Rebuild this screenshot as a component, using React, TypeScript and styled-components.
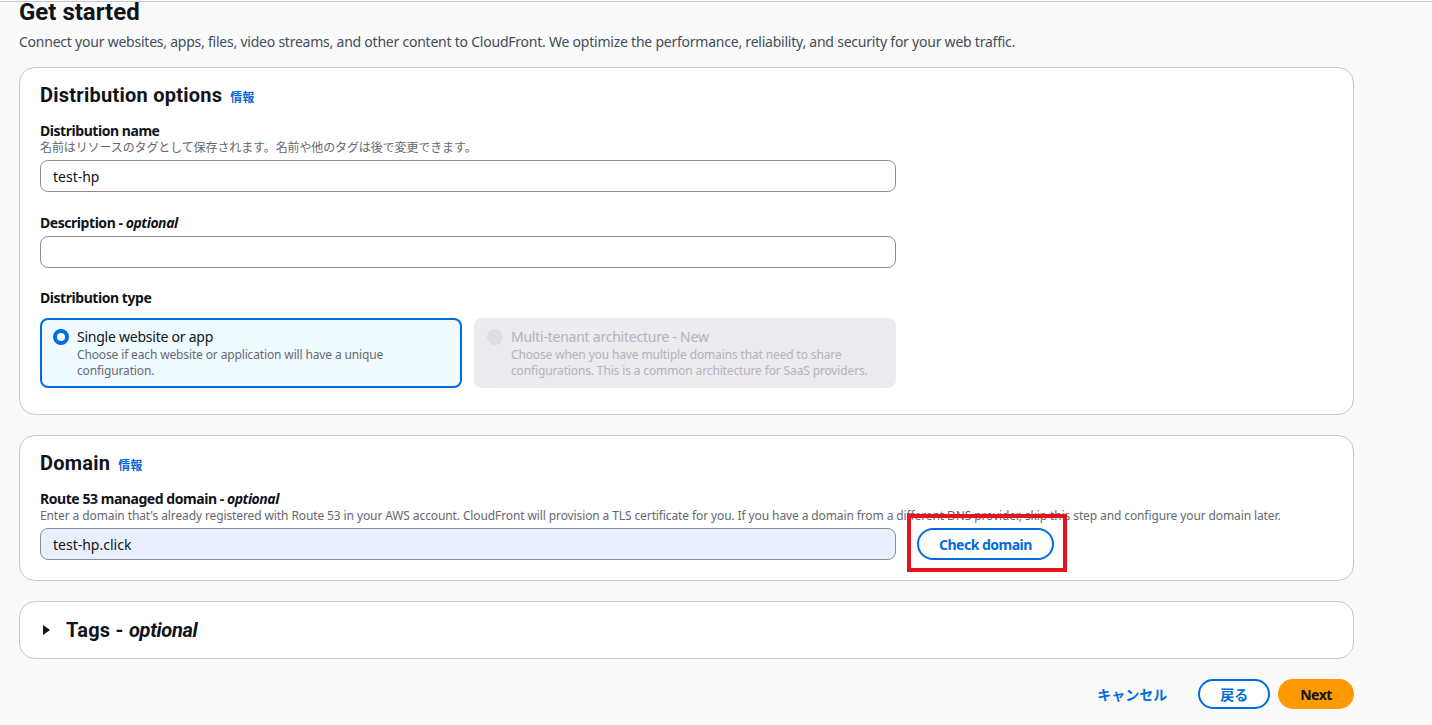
import styled, { createGlobalStyle } from "styled-components"

const GlobalStyle = createGlobalStyle`
    body {
        margin:0;
        background:#fafafa;
        font-family:"Noto Sans", "Noto Sans CJK JP", sans-serif;
        color:#0f141a;
    }
`

const Page = styled.div`
    margin-top:1px;
    border-top:1px solid #c6c6cd;
    padding:0 78px 16px 19px;
`

const PageTitle = styled.h1`
    margin:0;
    font-family:Roboto, "Noto Sans CJK JP", sans-serif;
    font-size:24px;
    line-height:20px;
    font-weight:700;
`

const PageLead = styled.p`
    margin:10px 0 15px;
    font-size:14px;
    line-height:20px;
    letter-spacing:-0.23px;
    color:#414d5c;
`

const Card = styled.section<{ $pb?: number }>`
    background:white;
    border:1px solid #c6c6cd;
    border-radius:16px;
    padding:15px 20px ${p => p.$pb ?? 20}px;
    margin-bottom:20px;
`

const CardHeader = styled.div`
    display:flex;
    align-items:baseline;
    gap:8px;
`

const CardTitle = styled.h2`
    margin:0;
    font-family:Roboto, "Noto Sans CJK JP", sans-serif;
    font-size:20px;
    line-height:24px;
    font-weight:700;
    letter-spacing:0.25px;
    em { font-style:italic; letter-spacing:-0.3px; }
`

const Info = styled.a`
    font-size:12px;
    font-weight:700;
    color:#006ce0;
    text-decoration:none;
`

const Field = styled.div<{ $mt?: number }>`
    margin-top:${p => p.$mt ?? 15}px;
`

const Label = styled.div`
    font-size:14px;
    line-height:18px;
    font-weight:700;
    letter-spacing:-0.45px;
    em { font-style:italic; }
`

const Hint = styled.div`
    font-size:12px;
    line-height:16px;
    letter-spacing:-0.11px;
    color:#656871;
`

const Input = styled.input<{ $filled?: boolean }>`
    display:block;
    box-sizing:border-box;
    width:856px;
    height:32px;
    margin-top:4px;
    padding:0 12px;
    border:1px solid #8c8c94;
    border-radius:8px;
    background:${p => (p.$filled ? "#e8f0fe" : "white")};
    font-family:inherit;
    font-size:14px;
    color:#0f141a;
    outline:none;
`

const TileGrid = styled.div`
    display:grid;
    grid-template-columns:422px 422px;
    gap:12px;
    margin-top:11px;
`

const Tile = styled.div<{ $selected?: boolean }>`
    display:flex;
    gap:8px;
    box-sizing:border-box;
    height:70px;
    padding:8px 12px 8px 11px;
    border:2px solid ${p => (p.$selected ? "#006ce0" : "#ebebf0")};
    border-radius:8px;
    background:${p => (p.$selected ? "#f0fbff" : "#ebebf0")};
    color:${p => (p.$selected ? "#0f141a" : "#b4b4bb")};
`

const Radio = styled.span<{ $selected?: boolean }>`
    flex:none;
    box-sizing:border-box;
    width:16px;
    height:16px;
    margin-top:1px;
    border-radius:50%;
    background:${p => (p.$selected ? "white" : "#dedee3")};
    border:${p => (p.$selected ? "4px solid #006ce0" : "none")};
`

const TileTitle = styled.div`
    font-size:14px;
    line-height:18px;
    letter-spacing:-0.24px;
`

const TileHint = styled.div<{ $selected?: boolean }>`
    font-size:12px;
    line-height:15.5px;
    margin-top:1px;
    letter-spacing:-0.14px;
    color:${p => (p.$selected ? "#656871" : "#b4b4bb")};
`

const DomainRow = styled.div`
    display:flex;
    align-items:center;
    gap:21px;
    margin-top:4px;
    input { margin-top:0; }
`

const Highlight = styled.div`
    position:relative;
`

const RedBox = styled.div`
    position:absolute;
    left:-10px;
    top:-14px;
    width:160px;
    height:58px;
    box-sizing:border-box;
    border:4px solid #e4141f;
    pointer-events:none;
`

const OutlineButton = styled.button`
    height:32px;
    padding:0 20px;
    border:2px solid #006ce0;
    border-radius:20px;
    background:white;
    color:#006ce0;
    font-family:inherit;
    font-size:14px;
    font-weight:700;
    letter-spacing:-0.5px;
`

const Expander = styled.div`
    display:flex;
    align-items:center;
    gap:16px;
    height:24px;
    padding:1px 0 0 3px;
`

const Caret = styled.span`
    width:0;
    height:0;
    border-top:5px solid transparent;
    border-bottom:5px solid transparent;
    border-left:7px solid #0f141a;
`

const Footer = styled.div`
    display:flex;
    justify-content:flex-end;
    align-items:center;
    gap:8px;
    margin-top:20px;
`

const LinkButton = styled.button`
    padding:4px 20px;
    margin-right:3px;
    border:none;
    background:none;
    color:#006ce0;
    font-family:inherit;
    font-size:14px;
    font-weight:700;
`

const FooterButton = styled.button<{ $primary?: boolean }>`
    height:30px;
    padding:0 20px;
    border:2px solid ${p => (p.$primary ? "#ff9900" : "#006ce0")};
    border-radius:20px;
    background:${p => (p.$primary ? "#ff9900" : "white")};
    color:${p => (p.$primary ? "#0f141a" : "#006ce0")};
    font-family:inherit;
    font-size:14px;
    font-weight:700;
    letter-spacing:${p => (p.$primary ? "-0.45px" : "0")};
`

export default function App() {
    return (
        <>
            <GlobalStyle />
            <Page>
                <PageTitle>Get started</PageTitle>
                <PageLead>
                    Connect your websites, apps, files, video streams, and other content to CloudFront. We optimize the performance, reliability, and security for your web traffic.
                </PageLead>

                <Card $pb={26}>
                    <CardHeader>
                        <CardTitle>Distribution options</CardTitle>
                        <Info href="#">情報</Info>
                    </CardHeader>
                    <Field>
                        <Label>Distribution name</Label>
                        <Hint>名前はリソースのタグとして保存されます。名前や他のタグは後で変更できます。</Hint>
                        <Input defaultValue="test-hp" />
                    </Field>
                    <Field $mt={22}>
                        <Label>Description - <em>optional</em></Label>
                        <Input />
                    </Field>
                    <Field $mt={21}>
                        <Label>Distribution type</Label>
                        <TileGrid>
                            <Tile $selected>
                                <Radio $selected />
                                <div>
                                    <TileTitle>Single website or app</TileTitle>
                                    <TileHint $selected>Choose if each website or application will have a unique configuration.</TileHint>
                                </div>
                            </Tile>
                            <Tile>
                                <Radio />
                                <div>
                                    <TileTitle>Multi-tenant architecture - New</TileTitle>
                                    <TileHint>Choose when you have multiple domains that need to share configurations. This is a common architecture for SaaS providers.</TileHint>
                                </div>
                            </Tile>
                        </TileGrid>
                    </Field>
                </Card>

                <Card>
                    <CardHeader>
                        <CardTitle>Domain</CardTitle>
                        <Info href="#">情報</Info>
                    </CardHeader>
                    <Field>
                        <Label>Route 53 managed domain - <em>optional</em></Label>
                        <Hint>Enter a domain that's already registered with Route 53 in your AWS account. CloudFront will provision a TLS certificate for you. If you have a domain from a different DNS provider, skip this step and configure your domain later.</Hint>
                        <DomainRow>
                            <Input $filled defaultValue="test-hp.click" />
                            <Highlight>
                                <OutlineButton>Check domain</OutlineButton>
                                <RedBox />
                            </Highlight>
                        </DomainRow>
                    </Field>
                </Card>

                <Card $pb={16}>
                    <Expander>
                        <Caret />
                        <CardTitle>Tags - <em>optional</em></CardTitle>
                    </Expander>
                </Card>

                <Footer>
                    <LinkButton>キャンセル</LinkButton>
                    <FooterButton>戻る</FooterButton>
                    <FooterButton $primary>Next</FooterButton>
                </Footer>
            </Page>
        </>
    )
}
